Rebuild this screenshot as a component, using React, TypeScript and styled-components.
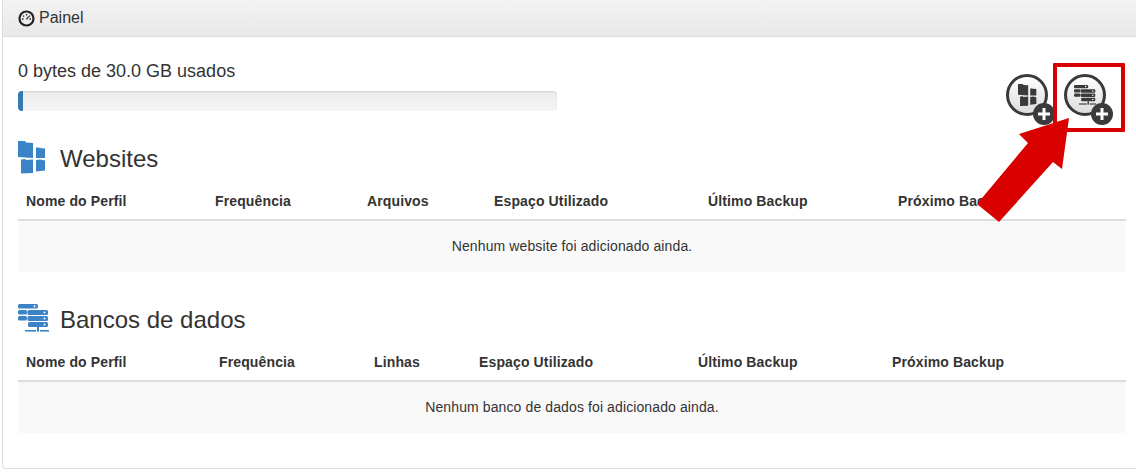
import React from "react";
import styled, { createGlobalStyle } from "styled-components";

const Global = createGlobalStyle`
  html, body { margin: 0; padding: 0; background: #fff; overflow: hidden; }
  body { font-family: "Liberation Sans", Arial, sans-serif; font-size: 14px; color: #333; }
`;
const Page = styled.div`position: relative; width: 1136px; height: 472px; overflow: hidden;`;
const Panel = styled.section`
  margin-left: 2px; width: 1140px; height: 469px; box-sizing: border-box;
  border: 1px solid #ddd; border-top: 0; border-radius: 0 0 4px 4px; background: #fff;
`;
const PanelHeading = styled.header`
  height: 37px; box-sizing: border-box; padding: 0 15px; display: flex; align-items: center; gap: 4px;
  background: linear-gradient(to bottom, #f3f3f3, #e8e8e8); border-bottom: 1px solid #ddd;
  font-size: 16px; color: #333;
`;
const PanelBody = styled.div`padding: 25px 0 0 15px; width: 1108px;`;
const TopRow = styled.div`display: flex; justify-content: space-between; align-items: flex-start; height: 66px;`;
const UsageBlock = styled.div`width: 539px;`;
const UsageText = styled.div`font-size: 18px; line-height: 18px;`;
const ProgressTrack = styled.div`
  margin-top: 11px; height: 20px; border-radius: 4px; overflow: hidden;
  background: linear-gradient(to bottom, #ebebeb, #f5f5f5);
  box-shadow: inset 0 1px 2px rgba(0,0,0,.1);
`;
const ProgressFill = styled.div`height: 100%; background: #337ab7;`;
const AddButtons = styled.div`display: flex; gap: 16px; margin: 12px 20px 0 0;`;
const AddButton = styled.div`
  position: relative; width: 42px; height: 42px; box-sizing: border-box; border-radius: 50%;
  border: 3px solid #3a3a3a; display: flex; align-items: center; justify-content: center;
  background: linear-gradient(to bottom, #fff, #dcdcdc); color: #3a3a3a;
`;
const PlusBadge = styled.span`
  position: absolute; right: -10px; bottom: -12px; width: 22px; height: 22px; border-radius: 50%;
  background: #3a3a3a; display: flex; align-items: center; justify-content: center;
`;
const SectionTitle = styled.div<{ $top: number; $gap: number }>`
  display: flex; align-items: center; gap: ${(p) => p.$gap}px; height: 34px; margin-top: ${(p) => p.$top}px; color: #3a83c6;
`;
const TitleIcon = styled.span<{ $lift: number }>`display: flex; margin-top: -${(p) => p.$lift}px;`;
const TitleText = styled.h3`margin: 0; font-size: 24px; font-weight: 400; color: #333; line-height: 34px;`;
const Table = styled.table`width: 1108px; border-collapse: collapse; table-layout: fixed; margin-top: 5px;`;
const Th = styled.th`
  text-align: left; padding: 2px 8px 0; height: 39px; box-sizing: border-box; font-size: 14px; font-weight: 700;
  letter-spacing: .13px; border-bottom: 2px solid #ddd; white-space: nowrap; overflow: visible;
`;
const EmptyCell = styled.td`
  height: 52px; box-sizing: border-box; padding: 0 0 1px; text-align: center; background: #f9f9f9; font-size: 14px; letter-spacing: .11px; color: #333;
`;
const Callout = styled.div`
  position: absolute; left: 1053px; top: 63px; width: 72px; height: 69px; box-sizing: border-box;
  border: 4px solid #d90000; border-radius: 1px;
`;
const ArrowSvg = styled.svg`position: absolute; left: 970px; top: 110px;`;

const Gauge = () => (
  <svg width="17" height="17" viewBox="0 0 17 17" aria-hidden="true">
    <circle cx="8.5" cy="8.5" r="7" fill="none" stroke="#222" strokeWidth="2.2" />
    <path d="M8.5 4v1.6M5 5.6l1 1M12 5.6l-1 1M4 9h1.500M13 9h-1.500M8.500 9.500l2-3" stroke="#222" strokeWidth="1.3" fill="none" />
  </svg>
);
const Blocks = ({ size }: { size: number }) => (
  <svg width={size} height={size * 33 / 28} viewBox="0 0 28 33" fill="currentColor" aria-hidden="true">
    <path d="M0 0L7 0L8 1.500L15 2V17L0 16Z" />
    <path d="M18 6.500L21 6.500L21.500 7L27 7.500V17L18 17Z" />
    <path d="M3 18.500L7 18L8 19L15 18.500V32L3 32.500Z" />
    <path d="M18 19L22 18.500L27 19.500V29.500L18 30.500Z" />
  </svg>
);
const Servers = ({ size }: { size: number }) => (
  <svg width={size} height={size * 28 / 31} viewBox="0 0 31 28" aria-hidden="true">
    <g fill="currentColor">
      <rect x="0" y="0" width="20" height="4.500" rx="1.500" />
      <rect x="0" y="6" width="9" height="4.500" rx="1.500" />
      <rect x="9.500" y="6" width="20.500" height="5" rx="1.500" />
      <rect x="0" y="12" width="9" height="4.500" rx="1.500" />
      <rect x="9.500" y="12" width="20.500" height="5" rx="1.500" />
      <rect x="10" y="18" width="20" height="5" rx="1.500" />
      <rect x="19" y="23" width="2" height="4.600" />
      <rect x="7" y="26" width="11" height="1.600" />
      <rect x="22" y="26" width="9" height="1.600" />
    </g>
    <g fill="#fff">
      <circle cx="16.500" cy="2.200" r="1" />
      <circle cx="26.500" cy="8.500" r="1" />
      <circle cx="26.500" cy="14.500" r="1" />
      <circle cx="26.500" cy="20.500" r="1" />
    </g>
  </svg>
);
const Plus = () => (
  <svg width="14" height="14" viewBox="0 0 14 14" aria-hidden="true">
    <path d="M7 1v12M1 7h12" stroke="#fff" strokeWidth="3" />
  </svg>
);

const siteCols = [189, 152, 127, 214, 190, 236];
const dbCols = [193, 155, 105, 219, 194, 242];

const DataTable = ({ cols, heads, empty }: { cols: number[]; heads: string[]; empty: string }) => (
  <Table>
    <colgroup>{cols.map((w, i) => <col key={i} width={w} />)}</colgroup>
    <thead><tr>{heads.map((h) => <Th key={h}>{h}</Th>)}</tr></thead>
    <tbody><tr><EmptyCell colSpan={6}>{empty}</EmptyCell></tr></tbody>
  </Table>
);

export default function App() {
  return (
    <Page>
      <Global />
      <Panel>
        <PanelHeading><Gauge />Painel</PanelHeading>
        <PanelBody>
          <TopRow>
            <UsageBlock>
              <UsageText>0 bytes de 30.0 GB usados</UsageText>
              <ProgressTrack><ProgressFill style={{ width: "1%" }} /></ProgressTrack>
            </UsageBlock>
            <AddButtons>
              <AddButton><Blocks size={19} /><PlusBadge><Plus /></PlusBadge></AddButton>
              <AddButton><Servers size={22} /><PlusBadge><Plus /></PlusBadge></AddButton>
            </AddButtons>
          </TopRow>
          <SectionTitle $top={14} $gap={14}>
            <TitleIcon $lift={4}><Blocks size={28} /></TitleIcon>
            <TitleText>Websites</TitleText>
          </SectionTitle>
          <DataTable cols={siteCols}
            heads={["Nome do Perfil", "Frequência", "Arquivos", "Espaço Utilizado", "Último Backup", "Próximo Backup"]}
            empty="Nenhum website foi adicionado ainda." />
          <SectionTitle $top={31} $gap={11}>
            <TitleIcon $lift={5}><Servers size={31} /></TitleIcon>
            <TitleText>Bancos de dados</TitleText>
          </SectionTitle>
          <DataTable cols={dbCols}
            heads={["Nome do Perfil", "Frequência", "Linhas", "Espaço Utilizado", "Último Backup", "Próximo Backup"]}
            empty="Nenhum banco de dados foi adicionado ainda." />
        </PanelBody>
      </Panel>
      <Callout />
      <ArrowSvg width="104" height="116" viewBox="970 110 104 116" aria-hidden="true">
        <polygon points="1069,118 1019,134 1028,143 977,204 999,222 1053,162 1062,169" fill="#d90000" />
      </ArrowSvg>
    </Page>
  );
}
